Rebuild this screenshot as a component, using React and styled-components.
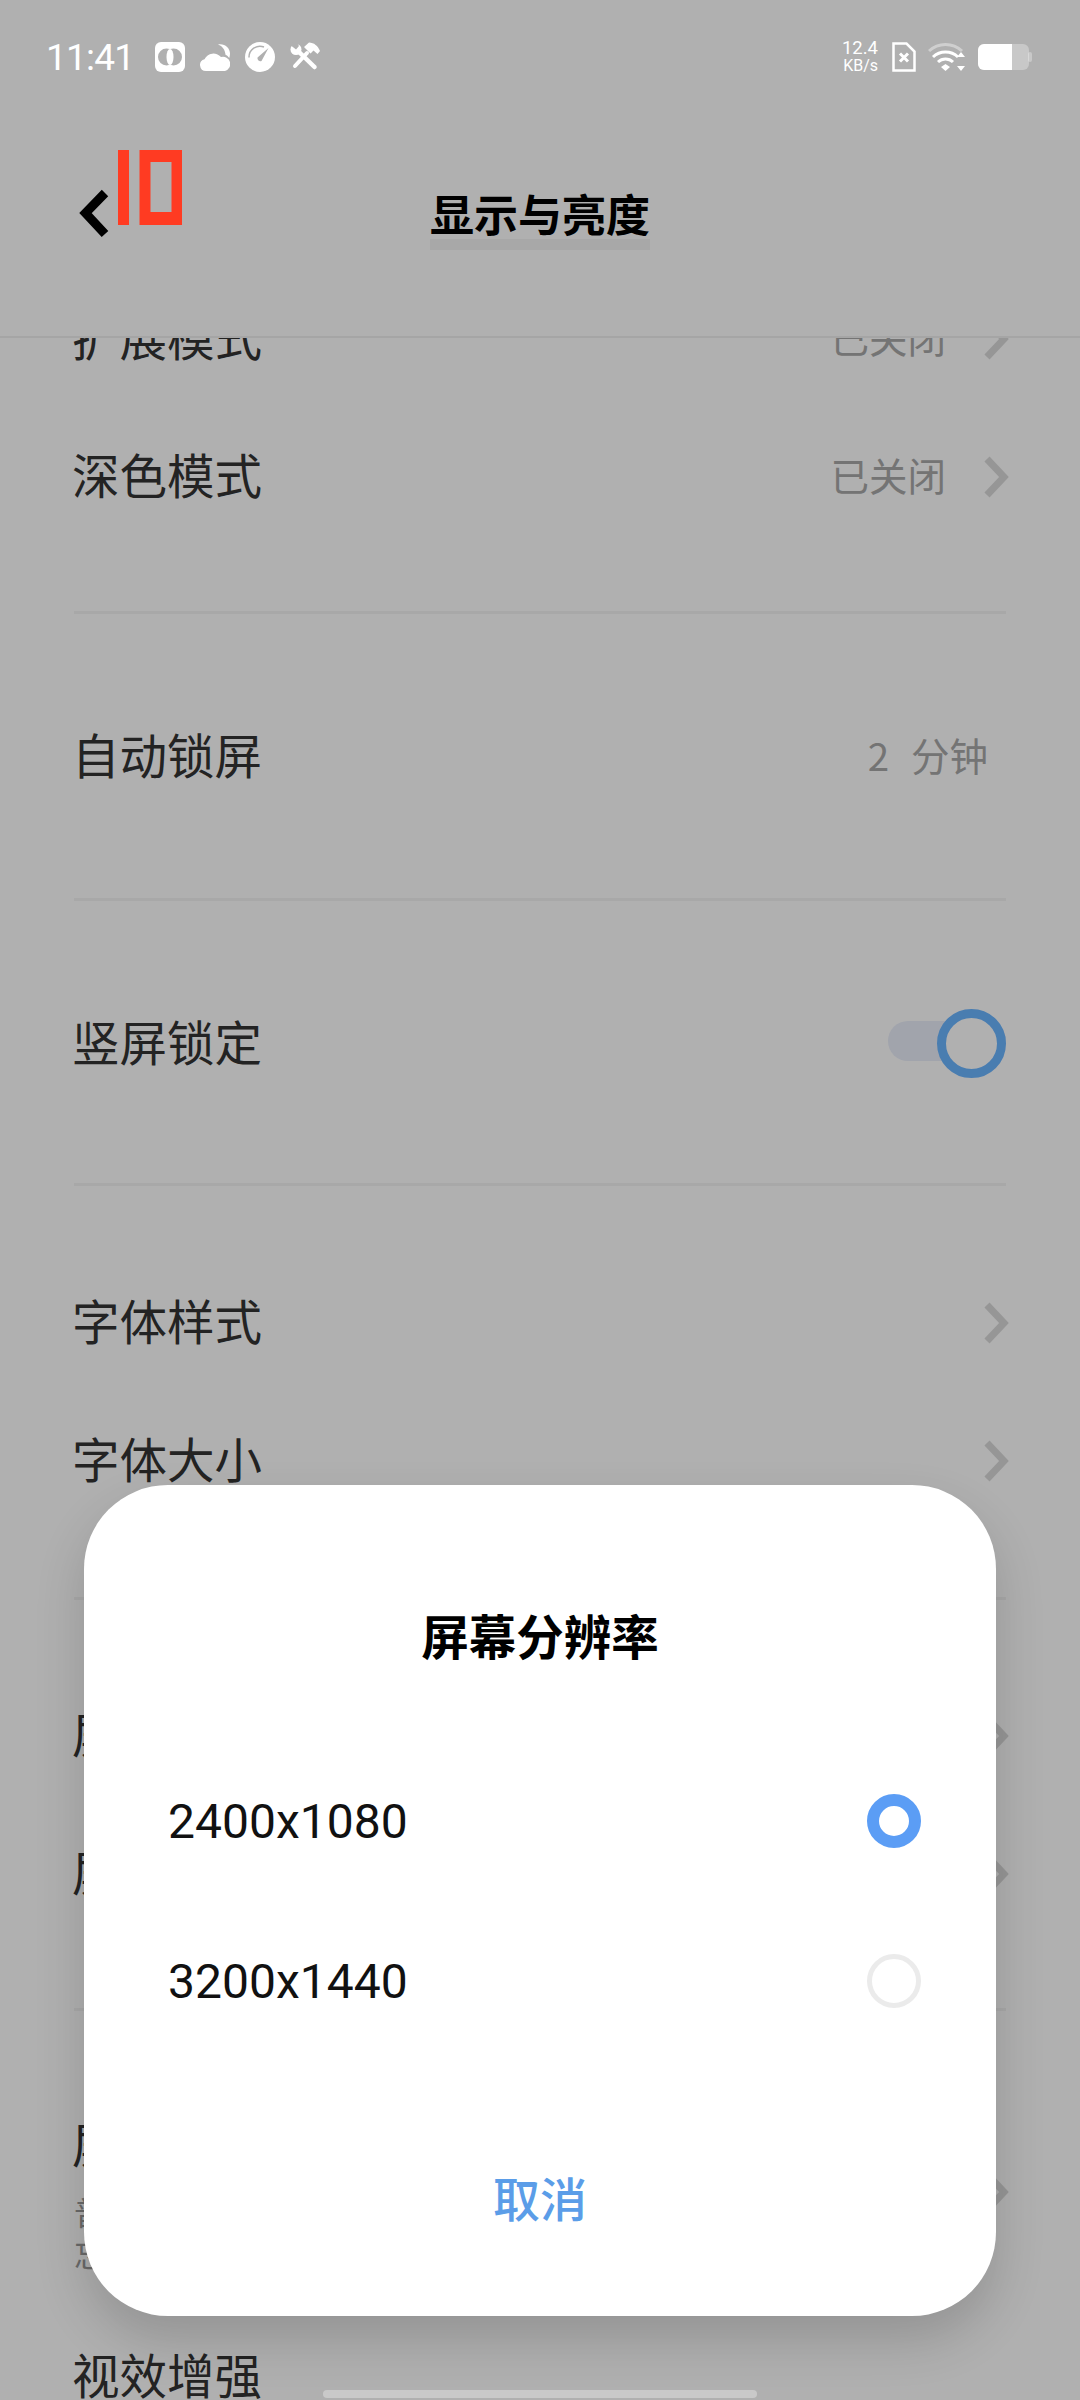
import styled, { createGlobalStyle } from 'styled-components';

const GlobalStyle = createGlobalStyle`
  html, body {
    margin: 0;
    padding: 0;
    background: #ffffff;
  }
  * {
    box-sizing: border-box;
  }
`;

const FONT = `"Noto Sans CJK SC", "Noto Sans", sans-serif`;

const Page = styled.div`
  position: relative;
  width: 1080px;
  height: 2400px;
  overflow: hidden;
  background: #ffffff;
  font-family: ${FONT};
`;

const StatusBar = styled.div`
  position: relative;
  z-index: 3;
  height: 114px;
  padding: 0 48px 0 47px;
  display: flex;
  align-items: center;
  justify-content: space-between;
  color: #ffffff;
`;

const StatusGroup = styled.div`
  display: flex;
  align-items: center;
  gap: ${(p) => p.$gap || 15}px;
`;

const Clock = styled.span`
  font-family: Roboto, sans-serif;
  font-size: 37px;
  font-weight: 400;
  letter-spacing: -0.8px;
  margin-right: 6px;
  margin-left: -1px;
`;

const Speed = styled.div`
  font-family: Roboto, sans-serif;
  font-size: 16px;
  line-height: 17px;
  text-align: right;
  margin-right: 2px;

  b {
    font-weight: 400;
    font-size: 18.5px;
  }
`;

const Header = styled.header`
  position: relative;
  height: 224px;
  padding: 0 74px;
  border-bottom: 2px solid #f0f0f0;
  display: grid;
  grid-template-columns: 1fr auto 1fr;
  align-items: start;
  background: #ffffff;
`;

const BackBox = styled.div`
  position: relative;
  z-index: 3;
  margin-top: 34px;
  display: flex;
`;

const Title = styled.h1`
  width: 220px;
  height: 69px;
  margin: 67px 0 0;
  font-size: 44px;
  line-height: 64px;
  font-weight: 700;
  white-space: nowrap;
  color: #000000;
  text-align: center;
  background: linear-gradient(#ffffff 0 58px, #f3f3f3 58px);
`;

const List = styled.div`
  margin-top: -71px;
  padding: 0 74px;
`;

const Row = styled.div`
  height: 138px;
  display: flex;
  align-items: center;
  justify-content: space-between;
`;

const TallRow = styled.div`
  margin-top: 101px;
  margin-bottom: 31px;
  display: flex;
  align-items: center;
  justify-content: space-between;
`;

const Label = styled.span`
  display: block;
  font-size: 47.5px;
  line-height: 62px;
  margin-left: -2px;
  color: #333333;
  white-space: nowrap;
`;

const Right = styled.div`
  display: flex;
  align-items: center;
  gap: 37px;
`;

const Value = styled.span`
  font-size: 38.5px;
  color: #a8a8a8;
  white-space: pre;
  word-spacing: 2.3px;
  margin-right: ${(p) => p.$mr || 0}px;
`;

const Divider = styled.div`
  height: 3px;
  margin: ${(p) => p.$m};
  background: #f4f4f4;
`;

const Sub = styled.p`
  margin: 16px 0 0;
  font-size: 32px;
  line-height: 42px;
  color: #999999;
`;

const Arrow = styled.svg`
  display: block;
  margin-right: -3px;
  margin-top: ${(p) => p.$mt}px;
`;

const Toggle = styled.div`
  position: relative;
  width: 118px;
  height: 40px;
  border-radius: 20px;
  background: #e9eefa;
`;

const Knob = styled.div`
  position: absolute;
  right: 0;
  top: -12px;
  width: 69px;
  height: 69px;
  border-radius: 50%;
  border: 9px solid #6bb5ff;
  background: #ffffff;
`;

const Scrim = styled.div`
  position: absolute;
  inset: 0;
  z-index: 2;
  background: rgba(0, 0, 0, 0.31);
`;

const Dialog = styled.div`
  position: absolute;
  z-index: 4;
  left: 84px;
  top: 1485px;
  width: 912px;
  height: 831px;
  padding: 112px 0 0;
  border-radius: 84px;
  background: #ffffff;
  box-shadow: 0 24px 50px rgba(0, 0, 0, 0.16);
  display: flex;
  flex-direction: column;
`;

const DialogTitle = styled.h2`
  margin: 0 0 68px;
  font-size: 47.5px;
  line-height: 76px;
  font-weight: 700;
  color: #000000;
  text-align: center;
`;

const Option = styled.div`
  height: 160px;
  padding: 0 75px 0 84px;
  display: flex;
  align-items: center;
  justify-content: space-between;
`;

const OptionText = styled.span`
  font-family: Roboto, sans-serif;
  font-size: 48px;
  color: #111111;
`;

const Radio = styled.div`
  width: 54px;
  height: 54px;
  border-radius: 50%;
  border: ${(p) => (p.$checked ? '12px solid #5b9df5' : '5px solid #ebebeb')};
`;

const CancelButton = styled.button`
  margin-top: 101px;
  border: none;
  padding: 0;
  background: none;
  font-family: ${FONT};
  font-size: 47px;
  line-height: 70px;
  font-weight: 500;
  color: #5b9de8;
`;

const HomeBar = styled.div`
  position: absolute;
  z-index: 4;
  left: 323px;
  bottom: 2px;
  width: 434px;
  height: 8px;
  border-radius: 4px;
  background: #c9c9c9;
`;

const Chevron = ({ top = 5 }) => (
  <Arrow $mt={top} width="26" height="44" viewBox="0 0 26 44" fill="none">
    <path d="M4 4l17 18L4 40" stroke="#dadada" strokeWidth="7" />
  </Arrow>
);

const BackLogo = () => (
  <svg width="112" height="92" viewBox="0 0 112 92">
    <path d="M31 45L11.500 65 31 86" fill="none" stroke="#000" strokeWidth="9" />
    <rect x="44" y="2" width="11" height="75" fill="#ff3b22" />
    <path fillRule="evenodd" d="M65.500 2H108v75H65.500zM76.500 14v50h21V14z" fill="#ff3b22" />
  </svg>
);

const AppIcon = () => (
  <svg width="30" height="30" viewBox="0 0 30 30">
    <rect width="30" height="30" rx="6" fill="#fff" />
    <circle cx="11.500" cy="15" r="8.500" fill="#b0b0b0" />
    <circle cx="18.500" cy="15" r="8.500" fill="#b0b0b0" />
    <ellipse cx="15" cy="15" rx="3.500" ry="8" fill="#fff" />
  </svg>
);

const WeatherIcon = () => (
  <svg width="30" height="30" viewBox="0 0 30 30" fill="#fff">
    <path d="M6 29a6 6 0 01-1.500-11.800A10 10 0 0121 15a7 7 0 014 14z" />
    <path d="M18 2.500c6-1.500 12 3 12 9 0 1.500-.2 3-.8 4.500-1-1.500-2.200-2.500-3.700-3.200C25.200 8 22.500 4 18 2.500z" />
  </svg>
);

const GaugeIcon = () => (
  <svg width="30" height="30" viewBox="0 0 30 30">
    <circle cx="15" cy="15" r="15" fill="#fff" />
    <path d="M4 15.500A11 11 0 0119 5" fill="none" stroke="#b0b0b0" strokeWidth="1.500" />
    <path d="M23.500 6L16.500 19a3 3 0 01-4-3.500z" fill="#b0b0b0" />
  </svg>
);

const ToolsIcon = () => (
  <svg width="30" height="30" viewBox="0 0 30 30">
    <path d="M17 11L5 24" stroke="#fff" strokeWidth="4" strokeLinecap="round" />
    <path d="M14 5l5-4.500c5 0 9 3.500 11 8.500l-2.500 3-4-3.500-3 3z" fill="#fff" />
    <path d="M8 9l16.500 16" stroke="#fff" strokeWidth="4.500" strokeLinecap="round" />
    <circle cx="6" cy="7.500" r="5.500" fill="#fff" />
    <path d="M-1 2l7 5.500 3-3.500-3-5z" fill="#b0b0b0" />
  </svg>
);

const SimIcon = () => (
  <svg width="24" height="30" viewBox="0 0 24 30" fill="none">
    <path d="M1.500 1.500h13l8 8v19h-21z" stroke="#fff" strokeWidth="2.500" />
    <path d="M8 11.500l8 8m0-8l-8 8" stroke="#fff" strokeWidth="3" />
  </svg>
);

const WifiIcon = () => (
  <svg width="38" height="30" viewBox="0 0 38 30" fill="none">
    <path d="M1 9a24 24 0 0133 0" stroke="#fff" strokeOpacity="0.4" strokeWidth="3" />
    <path d="M5 15a18 18 0 0125 0M10 20a11 11 0 0115 0" stroke="#fff" strokeWidth="3" />
    <path d="M13 25l4.500-3 4.500 3-4.500 4zM29 15l4-5 4 5zM29 24h8l-4 5z" fill="#fff" />
  </svg>
);

const BatteryIcon = () => (
  <svg width="54" height="26" viewBox="0 0 54 26">
    <rect x="0" y="0" width="51" height="26" rx="6" fill="#fff" fillOpacity="0.3" />
    <path d="M6 0h28v26H6a6 6 0 01-6-6V6a6 6 0 016-6z" fill="#fff" />
    <rect x="50" y="8" width="4" height="10" rx="2" fill="#fff" fillOpacity="0.3" />
  </svg>
);

export default function App() {
  return (
    <Page>
      <GlobalStyle />
      <StatusBar>
        <StatusGroup>
          <Clock>11:41</Clock>
          <AppIcon />
          <WeatherIcon />
          <GaugeIcon />
          <ToolsIcon />
        </StatusGroup>
        <StatusGroup $gap="12">
          <Speed>
            <b>12.4</b>
            <br />
            KB/s
          </Speed>
          <SimIcon />
          <WifiIcon />
          <BatteryIcon />
        </StatusGroup>
      </StatusBar>
      <Header>
        <BackBox>
          <BackLogo />
        </BackBox>
        <Title>显示与亮度</Title>
      </Header>
      <List>
        <Row>
          <Label>扩展模式</Label>
          <Right>
            <Value>已关闭</Value>
            <Chevron />
          </Right>
        </Row>
        <Row>
          <Label>深色模式</Label>
          <Right>
            <Value>已关闭</Value>
            <Chevron />
          </Right>
        </Row>
        <Divider $m="68px 0 71px" />
        <Row>
          <Label>自动锁屏</Label>
          <Value $mr="18">2  分钟</Value>
        </Row>
        <Divider $m="75px 0 71px" />
        <Row>
          <Label>竖屏锁定</Label>
          <Toggle>
            <Knob />
          </Toggle>
        </Row>
        <Divider $m="73px 0 65px" />
        <Row>
          <Label>字体样式</Label>
          <Chevron />
        </Row>
        <Row>
          <Label>字体大小</Label>
          <Chevron />
        </Row>
        <Divider $m="70px 0 64px" />
        <Row>
          <Label>屏幕分辨率</Label>
          <Chevron />
        </Row>
        <Row>
          <Label>屏幕刷新率</Label>
          <Chevron />
        </Row>
        <Divider $m="68px 0 0" />
        <TallRow>
          <div>
            <Label>屏幕色彩</Label>
            <Sub>
              普通模式
              <br />
              忘记
            </Sub>
          </div>
          <Chevron top={-2} />
        </TallRow>
        <Row>
          <Label>视效增强</Label>
        </Row>
      </List>
      <Scrim />
      <Dialog>
        <DialogTitle>屏幕分辨率</DialogTitle>
        <Option>
          <OptionText>2400x1080</OptionText>
          <Radio $checked />
        </Option>
        <Option>
          <OptionText>3200x1440</OptionText>
          <Radio />
        </Option>
        <CancelButton>取消</CancelButton>
      </Dialog>
      <HomeBar />
    </Page>
  );
}
